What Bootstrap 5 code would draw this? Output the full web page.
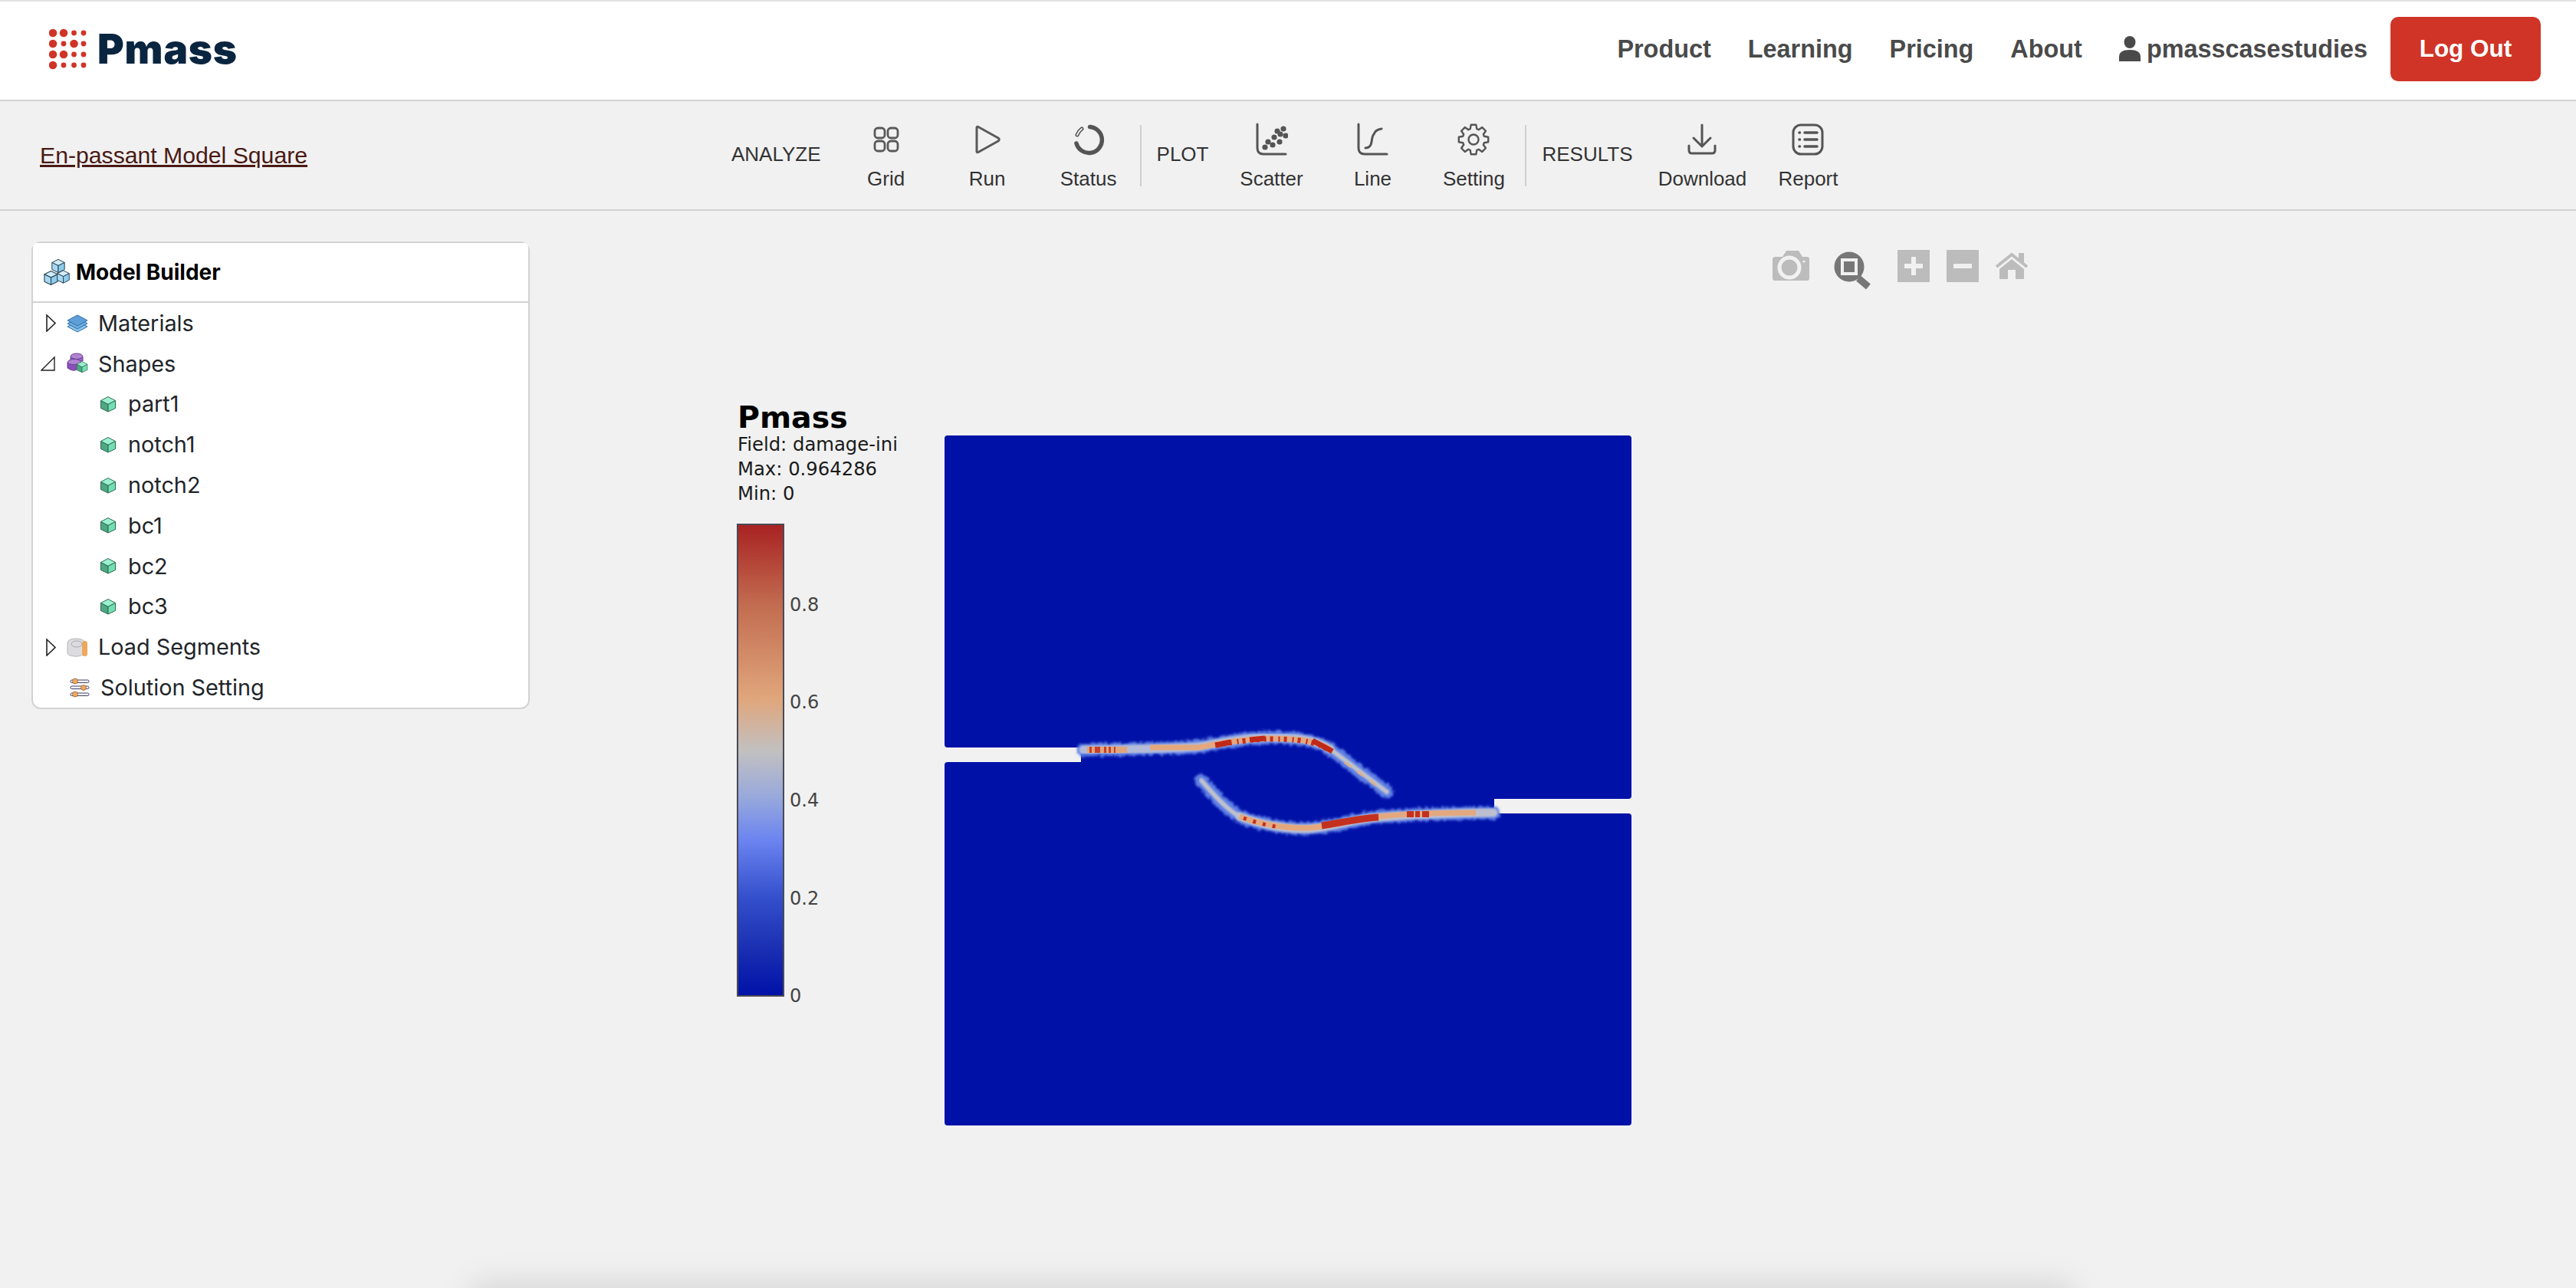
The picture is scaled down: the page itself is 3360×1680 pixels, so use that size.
<!DOCTYPE html>
<html lang="en">
<head>
  <meta charset="UTF-8" />
  <title>Pmass</title>
  <link href="https://cdn.jsdelivr.net/npm/bootstrap@5.3.0/dist/css/bootstrap.min.css" rel="stylesheet" />
  <style>
    html, body { height: 100%; }
    body { background: #f1f1f1; overflow: hidden; font-family: "Liberation Sans", Arial, sans-serif; }

    .top-bar { height: 132px; background: #fff; border-top: 2px solid #e2e2e2; border-bottom: 2px solid #d2d2d2; padding: 0 46px 4px 64px; }
    .brand-name { font-family: Inter, "Liberation Sans", sans-serif; font-weight: 900; font-size: 53px; color: #0a2540; line-height: 1; letter-spacing: .8px; }
    .top-bar .navbar-brand { padding: 0; margin: 0; gap: 13px; }
    .top-bar .navbar-nav .nav-link { font-size: 32.4px; font-weight: 700; color: #4a4a4a; padding: 0 24px; font-family: "Liberation Sans", sans-serif; }
    .top-bar .navbar-nav .user-link { gap: 8px; }
    .logout-btn { width: 196px; height: 84px; margin-left: 6px; background: #d03427; border: 0; border-radius: 10px; color: #fff; font-size: 31.5px; font-weight: 700; }

    .tool-bar { height: 143px; border-bottom: 2px solid #d2d2d2; }
    .case-link { width: 954px; padding-left: 52px; font-size: 30.2px; color: #4a1a14; }
    .group-label { font-size: 26px; color: #333; padding: 0 21px 0 0; margin-top: -2px; }
    .label-analyze { padding-right: 19px; }
    .label-plot { padding-right: 16px; }
    .label-results { padding-right: 22px; }
    .tool-item { width: 132px; color: #333; font-size: 26px; line-height: 1; }
    .tool-item svg { display: block; margin-bottom: 16px; }
    .tool-wide { width: 138px; }
    .tool-sep { width: 2px; height: 80px; background: #cfcfcf; margin: 0 20px 0 1px; }

    .tree-card { width: 650px; height: 610px; margin: 40px 0 0 41px; border: 2px solid #d2d2d2; border-radius: 12px; flex: none; color: #000; font-family: Inter, "Liberation Sans", sans-serif; }
    .tree-card .card-header { height: 80px; background: #fff; border-bottom: 2px solid #d2d2d2; padding: 0 0 0 13px; gap: 7px; font-size: 28px; font-weight: 700; }
    .tree-row { height: 52.8px; font-size: 28.8px; border: 0; padding: 0; background: transparent; }
    .tree-top { padding-left: 10px; }
    .arrow-slot { width: 24px; height: 24px; margin-right: 10px; flex: none; }
    .tree-icon { width: 28px; height: 30px; margin-right: 13px; flex: none; }
    .tree-child { padding-left: 87px; }
    .tree-child svg { margin-right: 15px; }
    .tree-plain { padding-left: 48px; }
    .tree-plain svg { margin-right: 14px; }

    .plot-svg { margin: 25px 0 0 209px; flex: none; }
    .plot-svg text { font-family: "DejaVu Sans", Verdana, sans-serif; }
    .edge-shadow { position: fixed; left: 620px; width: 2080px; bottom: -56px; height: 56px; box-shadow: 0 0 44px 4px rgba(0,0,0,.13); }
  </style>
</head>
<body>
  <svg width="0" height="0" class="d-block">
    <defs>
      <symbol id="cube" viewBox="0 0 22 22">
        <path d="M11 1.5 20.5 6.5 11 11.5 1.5 6.5Z" fill="#9af0cf" stroke="#2f6a52" stroke-width="1" stroke-linejoin="round"/>
        <path d="M1.5 6.5 11 11.5V21L1.5 16.5Z" fill="#4fa883" stroke="#2f6a52" stroke-width="1" stroke-linejoin="round"/>
        <path d="M20.5 6.5 11 11.5V21L20.5 16.5Z" fill="#72dfb3" stroke="#2f6a52" stroke-width="1" stroke-linejoin="round"/>
      </symbol>
      <symbol id="arrow-right" viewBox="0 0 24 24">
        <path d="M8 2 19 12.5 8 23Z" fill="none" stroke="#222" stroke-width="1.6"/>
      </symbol>
      <symbol id="blue-cube" viewBox="0 0 22 22">
        <path d="M11 1.5 20 6 11 10.5 2 6Z" fill="#d3ecfa" stroke="#26404f" stroke-width="1.1" stroke-linejoin="round"/>
        <path d="M2 6 11 10.5V20.5L2 16Z" fill="#a9d8f2" stroke="#26404f" stroke-width="1.1" stroke-linejoin="round"/>
        <path d="M20 6 11 10.5V20.5L20 16Z" fill="#8ecbec" stroke="#26404f" stroke-width="1.1" stroke-linejoin="round"/>
      </symbol>
    </defs>
  </svg>

  <nav class="navbar navbar-expand top-bar">
    <a class="navbar-brand d-flex align-items-center" href="#">
      <svg width="50" height="54" viewBox="64 37 50 54">
        <g fill="#d03427">
          <circle cx="69" cy="43" r="5.3"/><circle cx="83" cy="43" r="5.3"/><circle cx="96.500" cy="43" r="3.400"/><circle cx="109" cy="43" r="3.400"/>
          <circle cx="69" cy="57" r="5.3"/><circle cx="83" cy="57" r="3.400"/><circle cx="96.500" cy="57" r="5.3"/><circle cx="109" cy="57" r="3.400"/>
          <circle cx="69" cy="71" r="5.3"/><circle cx="83" cy="71" r="5.3"/><circle cx="96.500" cy="71" r="3.400"/><circle cx="109" cy="71" r="3.400"/>
          <circle cx="69" cy="85" r="5.3"/><circle cx="83" cy="85" r="3.400"/><circle cx="96.500" cy="85" r="3.400"/><circle cx="109" cy="85" r="3.400"/>
        </g>
      </svg>
      <span class="brand-name">Pmass</span>
    </a>
    <ul class="navbar-nav ms-auto align-items-center">
      <li class="nav-item"><a class="nav-link" href="#">Product</a></li>
      <li class="nav-item"><a class="nav-link" href="#">Learning</a></li>
      <li class="nav-item"><a class="nav-link" href="#">Pricing</a></li>
      <li class="nav-item"><a class="nav-link" href="#">About</a></li>
      <li class="nav-item">
        <a class="nav-link user-link d-flex align-items-center" href="#">
          <svg width="28" height="33" viewBox="0 0 28 33"><ellipse cx="14" cy="8" rx="7.500" ry="8" fill="#4a4a4a"/><path d="M0 33V27C0 21 5 18 14 18S28 21 28 27V33Z" fill="#4a4a4a"/></svg>
          pmasscasestudies
        </a>
      </li>
      <li class="nav-item"><button class="btn logout-btn" type="button">Log Out</button></li>
    </ul>
  </nav>

  <div class="tool-bar d-flex align-items-center">
    <a class="case-link" href="#">En-passant Model Square</a>
    <div class="d-flex align-items-center">
      <span class="group-label label-analyze">ANALYZE</span>
      <div class="tool-item d-flex flex-column align-items-center">
        <svg width="44" height="44" viewBox="0 0 44 44" fill="none" stroke="#5a5a5a" stroke-width="2.800">
          <rect x="7" y="7" width="13" height="13" rx="4"/><rect x="24" y="7" width="13" height="13" rx="4"/>
          <rect x="7" y="24" width="13" height="13" rx="4"/><rect x="24" y="24" width="13" height="13" rx="4"/>
        </svg>
        <span>Grid</span>
      </div>
      <div class="tool-item d-flex flex-column align-items-center">
        <svg width="44" height="44" viewBox="0 0 44 44" fill="none" stroke="#5a5a5a" stroke-width="3" stroke-linejoin="round">
          <path d="M8 6.500Q8 4.500 10 5.500L36 20Q38.500 22 36 24L10 38.500Q8 39.500 8 37.500Z"/>
        </svg>
        <span>Run</span>
      </div>
      <div class="tool-item d-flex flex-column align-items-center">
        <svg width="44" height="44" viewBox="0 0 44 44" fill="none">
          <path d="M23.500 5.500A17 17 0 1 1 6 27" stroke="#555" stroke-width="5.500" stroke-linecap="round"/>
          <path d="M7 16Q9 11 13 8" stroke="#555" stroke-width="5" stroke-linecap="round"/>
          <path d="M7 16Q9 11 13 8" stroke="#f1f1f1" stroke-width="2" stroke-linecap="round"/>
        </svg>
        <span>Status</span>
      </div>
      <span class="tool-sep"></span>
      <span class="group-label label-plot">PLOT</span>
      <div class="tool-item d-flex flex-column align-items-center">
        <svg width="44" height="44" viewBox="0 0 44 44" fill="none">
          <path d="M4 2V33Q4 41 12 41H41" stroke="#555" stroke-width="3" stroke-linecap="round"/>
          <g fill="#555">
            <circle cx="14" cy="32" r="3.600"/><circle cx="18" cy="25" r="3.600"/><circle cx="24" cy="29" r="3.600"/><circle cx="26" cy="19" r="3.600"/>
            <circle cx="33" cy="25" r="3.600"/><circle cx="34" cy="15" r="3.600"/><circle cx="38" cy="8" r="3.600"/><circle cx="41" cy="17" r="3.600"/><circle cx="30" cy="11" r="3.600"/>
          </g>
        </svg>
        <span>Scatter</span>
      </div>
      <div class="tool-item d-flex flex-column align-items-center">
        <svg width="44" height="44" viewBox="0 0 44 44" fill="none" stroke="#555" stroke-width="3" stroke-linecap="round">
          <path d="M4 2V33Q4 41 12 41H41"/>
          <path d="M13 33Q20 33 21 25T24 15Q26 9 34 8"/>
        </svg>
        <span>Line</span>
      </div>
      <div class="tool-item d-flex flex-column align-items-center">
        <svg width="44" height="44" viewBox="-22 -22 44 44" fill="none" stroke="#555" stroke-width="2.400" stroke-linejoin="round">
          <path id="gearPath"/>
          <circle r="6.500"/>
        </svg>
        <span>Setting</span>
      </div>
      <span class="tool-sep"></span>
      <span class="group-label label-results">RESULTS</span>
      <div class="tool-item tool-wide d-flex flex-column align-items-center">
        <svg width="44" height="44" viewBox="0 0 44 44" fill="none" stroke="#555" stroke-width="3" stroke-linecap="round" stroke-linejoin="round">
          <path d="M22 3V30M11 20 22 31 33 20"/>
          <path d="M5 30V36Q5 40 9 40H35Q39 40 39 36V30"/>
        </svg>
        <span>Download</span>
      </div>
      <div class="tool-item tool-wide d-flex flex-column align-items-center">
        <svg width="44" height="44" viewBox="0 0 44 44" fill="none" stroke="#555" stroke-width="3" stroke-linecap="round">
          <rect x="3" y="3" width="38" height="38" rx="10"/>
          <path d="M11 13H11.500M18 13H34M11 22H11.500M18 22H34M11 31H11.500M18 31H34" stroke-width="3.600"/>
        </svg>
        <span>Report</span>
      </div>
    </div>
  </div>

  <main class="d-flex align-items-start">
    <div class="card tree-card">
      <div class="card-header d-flex align-items-center">
        <svg width="36" height="36" viewBox="0 0 36 36">
          <use href="#blue-cube" x="10" y="0" width="20" height="20"/>
          <use href="#blue-cube" x="0" y="15" width="21" height="21"/>
          <use href="#blue-cube" x="17" y="14" width="19" height="20"/>
        </svg>
        Model Builder
      </div>
      <ul class="list-group list-group-flush">
        <li class="list-group-item tree-row tree-top d-flex align-items-center">
          <svg class="arrow-slot"><use href="#arrow-right"/></svg>
          <svg class="tree-icon" viewBox="0 0 28 30">
            <path d="M14 13 27 20 14 27 1 20Z" fill="#8fc4ea" stroke="#2d6fa5"/>
            <path d="M14 9 27 16 14 23 1 16Z" fill="#6db0e3" stroke="#2d6fa5"/>
            <path d="M14 5 27 12 14 19 1 12Z" fill="#5f9fd8" stroke="#2d6fa5"/>
          </svg>
          <span>Materials</span>
        </li>
        <li class="list-group-item tree-row tree-top d-flex align-items-center">
          <svg class="arrow-slot" viewBox="0 0 24 24"><path d="M18 4V21H1Z" fill="none" stroke="#222" stroke-width="1.400"/></svg>
          <svg class="tree-icon" viewBox="0 0 28 30">
            <ellipse cx="13" cy="6" rx="8" ry="4" fill="#b184d3" stroke="#6b3f92"/>
            <path d="M5 7V12H21V7Q13 12 5 7Z" fill="#9b63c8" stroke="#6b3f92"/>
            <ellipse cx="10" cy="14" rx="9" ry="4.500" fill="#b184d3" stroke="#6b3f92"/>
            <path d="M1 14V21Q10 27 14 22V16Q6 18 1 14Z" fill="#8c4fb8" stroke="#6b3f92"/>
            <use href="#cube" x="12" y="10" width="16" height="19"/>
          </svg>
          <span>Shapes</span>
        </li>
        <li class="list-group-item tree-row tree-child d-flex align-items-center"><svg width="22" height="22"><use href="#cube"/></svg><span>part1</span></li>
        <li class="list-group-item tree-row tree-child d-flex align-items-center"><svg width="22" height="22"><use href="#cube"/></svg><span>notch1</span></li>
        <li class="list-group-item tree-row tree-child d-flex align-items-center"><svg width="22" height="22"><use href="#cube"/></svg><span>notch2</span></li>
        <li class="list-group-item tree-row tree-child d-flex align-items-center"><svg width="22" height="22"><use href="#cube"/></svg><span>bc1</span></li>
        <li class="list-group-item tree-row tree-child d-flex align-items-center"><svg width="22" height="22"><use href="#cube"/></svg><span>bc2</span></li>
        <li class="list-group-item tree-row tree-child d-flex align-items-center"><svg width="22" height="22"><use href="#cube"/></svg><span>bc3</span></li>
        <li class="list-group-item tree-row tree-top d-flex align-items-center">
          <svg class="arrow-slot"><use href="#arrow-right"/></svg>
          <svg class="tree-icon" viewBox="0 0 28 30">
            <path d="M1 10Q1 4 12 4T24 10V22Q20 28 10 27T1 22Z" fill="#dcdce0" stroke="#b5b5ba"/>
            <ellipse cx="13" cy="11" rx="7" ry="4" fill="none" stroke="#a8a8ae"/>
            <rect x="20" y="7" width="7" height="20" rx="3.500" fill="#eca85c"/>
          </svg>
          <span>Load Segments</span>
        </li>
        <li class="list-group-item tree-row tree-plain d-flex align-items-center">
          <svg width="26" height="26" viewBox="0 0 26 26" fill="none">
            <rect x="1" y="3" width="24" height="3.500" rx="1.700" fill="#fff" stroke="#3a3a6a"/>
            <rect x="1" y="11" width="24" height="3.500" rx="1.700" fill="#fff" stroke="#3a3a6a"/>
            <rect x="1" y="20" width="24" height="3.500" rx="1.700" fill="#fff" stroke="#3a3a6a"/>
            <circle cx="7" cy="4.500" r="3.500" fill="#f0a860" stroke="#8a5a30" stroke-width=".7"/>
            <circle cx="18" cy="13" r="3.500" fill="#f0a860" stroke="#8a5a30" stroke-width=".7"/>
            <circle cx="7" cy="21.500" r="3.500" fill="#f0a860" stroke="#8a5a30" stroke-width=".7"/>
          </svg>
          <span>Solution Setting</span>
        </li>
      </ul>
    </div>

    <svg class="plot-svg" width="1800" height="1200" viewBox="900 300 1800 1200">
      <defs>
        <linearGradient id="damageScale" x1="0" y1="1" x2="0" y2="0">
          <stop offset="0" stop-color="#0011a8"/>
          <stop offset=".1" stop-color="#1a2fb2"/>
          <stop offset=".21" stop-color="#3450cc"/>
          <stop offset=".33" stop-color="#6b84f0"/>
          <stop offset=".42" stop-color="#97a8dc"/>
          <stop offset=".52" stop-color="#c2c0c0"/>
          <stop offset=".63" stop-color="#e0a67c"/>
          <stop offset=".83" stop-color="#c26c50"/>
          <stop offset="1" stop-color="#a82222"/>
        </linearGradient>
        <filter id="softEdge" x="-5%" y="-30%" width="110%" height="160%">
          <feTurbulence type="fractalNoise" baseFrequency=".22" numOctaves="2" seed="4" result="noise"/>
          <feDisplacementMap in="SourceGraphic" in2="noise" scale="9" xChannelSelector="R" yChannelSelector="G"/>
          <feGaussianBlur stdDeviation="1.600"/>
        </filter>
        <filter id="softCore" x="-5%" y="-30%" width="110%" height="160%"><feGaussianBlur stdDeviation=".8"/></filter>
      </defs>

      <!-- modebar -->
      <g fill="#bcbcbc">
        <path d="M2316 335H2325L2330 327H2346L2351 335H2357Q2360 335 2360 338V363Q2360 366 2357 366H2315Q2312 366 2312 363V338Q2312 335 2316 335Z"/>
      </g>
      <circle cx="2334" cy="349" r="13" fill="#bcbcbc" stroke="#f1f1f1" stroke-width="5"/>
      <circle cx="2353" cy="341" r="1.600" fill="#f1f1f1"/>
      <circle cx="2412" cy="348" r="19.500" fill="#777"/>
      <path d="M2424 363 2437 374" stroke="#777" stroke-width="9"/>
      <rect x="2403" y="339" width="18" height="18" fill="none" stroke="#f1f1f1" stroke-width="4"/>
      <rect x="2475" y="326" width="42" height="42" fill="#bcbcbc"/>
      <path d="M2484 347H2508M2496 335V359" stroke="#f1f1f1" stroke-width="6"/>
      <rect x="2539" y="326" width="42" height="42" fill="#bcbcbc"/>
      <path d="M2548 347H2572" stroke="#f1f1f1" stroke-width="6"/>
      <path d="M2604 348 2624 332 2644 348" fill="none" stroke="#bcbcbc" stroke-width="4"/>
      <path d="M2608 351 2624 338 2640 351V364H2629V352H2619V364H2608Z M2633 330H2640V343L2633 337Z" fill="#bcbcbc"/>

      <!-- legend -->
      <text x="962" y="558" font-size="39.500" font-weight="700" fill="#000">Pmass</text>
      <text x="962" y="588" font-size="24.300" fill="#1a1a1a">Field: damage-ini</text>
      <text x="962" y="620" font-size="24.300" fill="#1a1a1a">Max: 0.964286</text>
      <text x="962" y="652" font-size="24.300" fill="#1a1a1a">Min: 0</text>
      <rect x="962" y="684" width="60" height="615" fill="url(#damageScale)" stroke="#4a4a55" stroke-width="2"/>
      <g font-size="24" fill="#444">
        <text x="1030" y="797">0.8</text>
        <text x="1030" y="924">0.6</text>
        <text x="1030" y="1052">0.4</text>
        <text x="1030" y="1180">0.2</text>
        <text x="1030" y="1307">0</text>
      </g>

      <!-- specimen -->
      <path d="M1236 568H2124Q2128 568 2128 572V1038Q2128 1042 2124 1042H1949V1061H2124Q2128 1061 2128 1065V1464Q2128 1468 2124 1468H1236Q1232 1468 1232 1464V998Q1232 994 1236 994H1410V975H1236Q1232 975 1232 971V572Q1232 568 1236 568Z" fill="#0011a8"/>

      <g fill="none" stroke-linecap="round" stroke-linejoin="round">
        <!-- upper band -->
        <path d="M1414 979V997" stroke="#5f80e6" stroke-width="5" filter="url(#softCore)"/>
        <path d="M1413 978C1470 977 1530 977 1563 974C1590 969 1625 962 1655 962C1690 962 1715 964 1735 977C1760 996 1785 1015 1809 1033" stroke="#5f80e6" stroke-width="17" filter="url(#softEdge)"/>
        <path d="M1413 978C1470 977 1530 977 1563 974C1590 969 1625 962 1655 962C1690 962 1715 964 1735 977" stroke="#b3bbd8" stroke-width="11" filter="url(#softCore)"/>
        <path d="M1735 977C1760 996 1785 1015 1809 1033" stroke="#c0c2cc" stroke-width="6" filter="url(#softCore)"/>
        <path d="M1418 978H1470" stroke="#e0a67c" stroke-width="8" stroke-linecap="butt"/>
        <path d="M1421 978H1455" stroke="#c8402a" stroke-width="8" stroke-dasharray="3 4 7 5 3 3" stroke-linecap="butt"/>
        <path d="M1500 975H1563C1590 970 1625 963 1655 963C1690 963 1715 965 1735 977" stroke="#e4a87e" stroke-width="7" stroke-linecap="butt"/>
        <path d="M1585 972C1605 968 1640 964 1655 964C1690 964 1715 966 1735 979" stroke="#c4301f" stroke-width="7" stroke-dasharray="4 7 2 5" stroke-linecap="butt"/>
        <path d="M1586 972 1605 968M1630 965 1650 963M1712 966 1738 980" stroke="#c02818" stroke-width="7" stroke-linecap="butt"/>
        <path d="M1755 995 1800 1028" stroke="#dcb08e" stroke-width="3" stroke-dasharray="8 12"/>

        <!-- lower band -->
        <path d="M1946 1060V1042" stroke="#5f80e6" stroke-width="6" filter="url(#softCore)"/>
        <path d="M1567 1018C1585 1038 1600 1056 1617 1065C1640 1074 1675 1082 1707 1081C1735 1079 1755 1072 1780 1068C1820 1063 1880 1061 1948 1060" stroke="#5f80e6" stroke-width="17" filter="url(#softEdge)"/>
        <path d="M1567 1018C1585 1038 1600 1056 1617 1065" stroke="#c0c2cc" stroke-width="6" filter="url(#softCore)"/>
        <path d="M1617 1065C1640 1074 1675 1082 1707 1081C1735 1079 1755 1072 1780 1068C1820 1063 1880 1061 1948 1060" stroke="#bdbfd0" stroke-width="11" filter="url(#softCore)"/>
        <path d="M1617 1065C1640 1074 1675 1081 1707 1080C1735 1078 1755 1071 1780 1067C1820 1062 1860 1060 1925 1060" stroke="#e4a87e" stroke-width="7" stroke-linecap="butt"/>
        <path d="M1622 1067C1640 1074 1660 1078 1670 1079" stroke="#c4301f" stroke-width="5" stroke-dasharray="4 9" stroke-linecap="butt"/>
        <path d="M1724 1077C1745 1074 1775 1067 1798 1066" stroke="#c4301f" stroke-width="9" stroke-linecap="butt"/>
        <path d="M1835 1062H1865" stroke="#c4301f" stroke-width="8" stroke-dasharray="9 2 6 3" stroke-linecap="butt"/>
      </g>
    </svg>
  </main>

  <div class="edge-shadow"></div>

  <script src="https://cdn.jsdelivr.net/npm/bootstrap@5.3.0/dist/js/bootstrap.bundle.min.js"></script>
  <script>
    // eight lobed gear outline
    const pts = [];
    for (let i = 0; i < 8; i++) {
      const a = i * Math.PI / 4;
      [[-0.30, 14.5], [-0.17, 19.5], [0.17, 19.5], [0.30, 14.5]].forEach(function (p) {
        pts.push((p[1] * Math.sin(a + p[0])).toFixed(2) + " " + (-p[1] * Math.cos(a + p[0])).toFixed(2));
      });
    }
    document.getElementById("gearPath").setAttribute("d", "M" + pts.join("L") + "Z");
  </script>
</body>
</html>
